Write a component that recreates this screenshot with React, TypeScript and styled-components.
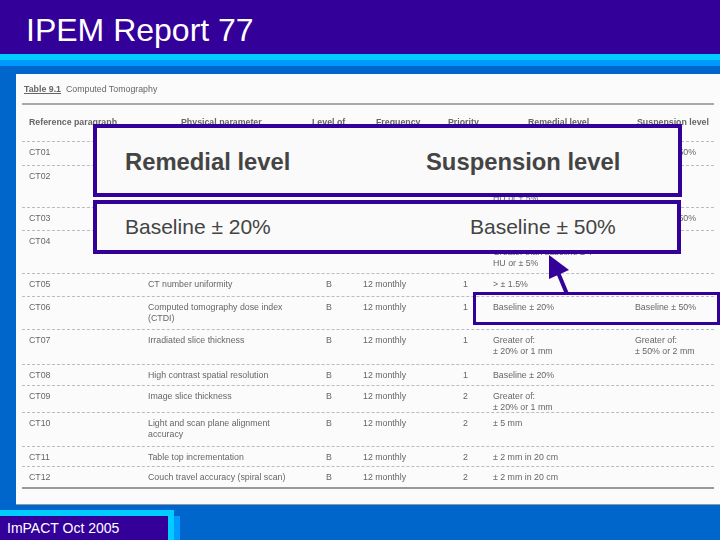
import React from 'react';
import styled, { createGlobalStyle } from 'styled-components';

const PURPLE = '#330099';
const CYAN = '#00ccff';
const SKY = '#0099ff';
const BLUE = '#0066cc';
const INK = '#666';

const Global = createGlobalStyle`
  html, body { margin: 0; padding: 0; background: ${BLUE}; }
`;

const Slide = styled.div`
  width: 720px; height: 540px; overflow: hidden;
  display: flex; flex-direction: column;
  background: ${BLUE};
  font-family: "Liberation Sans", Arial, sans-serif;
`;
const TitleBar = styled.header`
  height: 54px; box-sizing: border-box; padding: 12px 0 0 26px;
  background: ${PURPLE}; color: #fff;
  font-size: 32px; line-height: 37px;
`;
const Stripe = styled.div<{ $color: string }>`
  height: 6px; background: ${p => p.$color};
`;
const Body = styled.main`
  flex: 1; min-height: 0; padding: 8px 0 0 16px;
`;
const Sheet = styled.section`
  position: relative; height: 431px; box-sizing: border-box;
  padding: 0 6px 0 6px;
  background: #fbfbfb;
  border-bottom: 1px solid #8a98a8;
`;
const Table = styled.div`
  color: ${INK}; font-size: 8.8px; line-height: 11px;
  filter: blur(0.35px);
`;
const Caption = styled.div`
  height: 31px; box-sizing: border-box; padding: 10px 0 0 2px;
  border-bottom: 2px solid #a8a8a8;
  display: flex; gap: 5px;
  b { font-weight: 700; text-decoration: underline; }
`;
const Row = styled.div<{ $h: number; $head?: boolean; $last?: boolean }>`
  height: ${p => p.$h}px; box-sizing: border-box;
  padding: ${p => (p.$head ? 12 : 5)}px 0 0 7px;
  display: grid;
  grid-template-columns: 119px 178px 37px 100px 30px 142px 1fr;
  border-bottom: ${p => (p.$last ? '2px solid #999' : '1px dashed #bcbcbc')};
  font-weight: ${p => (p.$head ? 700 : 400)};
  white-space: pre-line;
`;
const HeadCell = styled.div<{ $shift?: number }>`
  margin-left: ${p => p.$shift ?? 0}px;
  white-space: nowrap;
`;

const Panel = styled.div`
  position: absolute; box-sizing: border-box;
  border: 4px solid ${PURPLE};
  background: #fafafa; color: #444;
  display: grid; align-items: center; padding-left: 28px;
`;
const HeadingPanel = styled(Panel)`
  left: 77px; top: 50px; width: 589px; height: 73px;
  padding-top: 3px;
  grid-template-columns: 301px 1fr;
  font-size: 23.8px; font-weight: 700;
`;
const ValuePanel = styled(Panel)`
  left: 77px; top: 126px; width: 588px; height: 54px;
  grid-template-columns: 345px 1fr;
  font-size: 21px;
`;
const Callout = styled.div`
  position: absolute; left: 457px; right: 0; top: 218px; height: 33px;
  box-sizing: border-box; border: 3px solid ${PURPLE};
`;
const Arrow = styled.svg`
  position: absolute; left: 529px; top: 178px;
`;

const Footer = styled.footer`
  height: 35px; box-sizing: border-box; padding-top: 5px;
`;
const FooterTab = styled.div`
  width: 174px; height: 30px; box-sizing: border-box;
  padding: 3px 0 0 7px;
  background: ${PURPLE}; color: #fff;
  border-top: 6px solid ${CYAN}; border-right: 6px solid ${CYAN};
  box-shadow: 6px 6px 0 ${SKY};
  font-size: 14px; line-height: 18px;
`;

const headers: [string, number][] = [
  ['Reference paragraph', 0],
  ['Physical parameter', 33],
  ['Level of', -14],
  ['Frequency', 13],
  ['Priority', -15],
  ['Remedial level', 35],
  ['Suspension level', 2],
];

const rows: { h: number; cells: string[] }[] = [
  { h: 24, cells: ['CT01', '', '', '', '', '', 'Baseline ± 50%'] },
  { h: 42, cells: ['CT02', '', '', '', '', '\n\nHU or ± 5%', ''] },
  { h: 23, cells: ['CT03', '', '', '', '', '', 'Baseline ± 50%'] },
  { h: 43, cells: ['CT04', '', '', '', '', '\nGreater than baseline ± 4\nHU or ± 5%', ''] },
  { h: 23, cells: ['CT05', 'CT number uniformity', 'B', '12 monthly', '1', '> ± 1.5%', ''] },
  { h: 33, cells: ['CT06', 'Computed tomography dose index\n(CTDI)', 'B', '12 monthly', '1', 'Baseline ± 20%', 'Baseline ± 50%'] },
  { h: 35, cells: ['CT07', 'Irradiated slice thickness', 'B', '12 monthly', '1', 'Greater of:\n± 20% or 1 mm', 'Greater of:\n± 50% or 2 mm'] },
  { h: 21, cells: ['CT08', 'High contrast spatial resolution', 'B', '12 monthly', '1', 'Baseline ± 20%', ''] },
  { h: 27, cells: ['CT09', 'Image slice thickness', 'B', '12 monthly', '2', 'Greater of:\n± 20% or 1 mm', ''] },
  { h: 34, cells: ['CT10', 'Light and scan plane alignment\naccuracy', 'B', '12 monthly', '2', '± 5 mm', ''] },
  { h: 20, cells: ['CT11', 'Table top incrementation', 'B', '12 monthly', '2', '± 2 mm in 20 cm', ''] },
  { h: 22, cells: ['CT12', 'Couch travel accuracy (spiral scan)', 'B', '12 monthly', '2', '± 2 mm in 20 cm', ''] },
];

export default function App() {
  return (
    <Slide>
      <Global />
      <TitleBar>IPEM Report 77</TitleBar>
      <Stripe $color={CYAN} />
      <Stripe $color={SKY} />
      <Body>
        <Sheet>
          <Table>
            <Caption><b>Table 9.1</b><span>Computed Tomography</span></Caption>
            <Row $h={37} $head>
              {headers.map(([label, shift]) => (
                <HeadCell key={label} $shift={shift}>{label}</HeadCell>
              ))}
            </Row>
            {rows.map((r, i) => (
              <Row key={r.cells[0]} $h={r.h} $last={i === rows.length - 1}>
                {r.cells.map((c, j) => <div key={j}>{c}</div>)}
              </Row>
            ))}
          </Table>
          <HeadingPanel>
            <span>Remedial level</span>
            <span>Suspension level</span>
          </HeadingPanel>
          <ValuePanel>
            <span>Baseline ± 20%</span>
            <span>Baseline ± 50%</span>
          </ValuePanel>
          <Callout />
          <Arrow width="32" height="44" viewBox="0 0 32 44">
            <path d="M4 3 L24 18 L4 27 Z" fill={PURPLE} />
            <path d="M12 18 L22 42" stroke={PURPLE} strokeWidth="4" fill="none" />
          </Arrow>
        </Sheet>
      </Body>
      <Footer>
        <FooterTab>ImPACT Oct 2005</FooterTab>
      </Footer>
    </Slide>
  );
}
